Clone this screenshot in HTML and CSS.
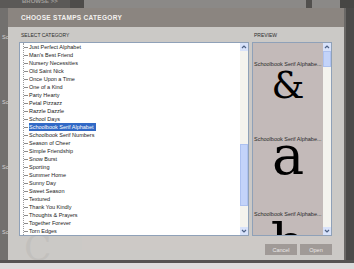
FILE: index.html
```html
<!DOCTYPE html>
<html lang="en">
<head>
    <meta charset="UTF-8">
    <meta name="viewport" content="width=device-width, initial-scale=1.0">
    <title>Choose Stamps Category</title>
    <link rel="stylesheet" href="styles.css">
</head>
<body>
    <div class="app">
        <div class="app-top">
            <div class="top-nav"><span>BROWSE &gt;&gt;</span></div>
            <div class="top-btn"></div>
            <div class="top-fill"></div>
            <div class="top-gap"></div>
            <div class="top-fill short"></div>
            <div class="top-end"></div>
        </div>
        <div class="app-middle">
            <div class="thumbs">
                <div class="thumb"><span>Sc</span></div>
                <div class="thumb"><span>Sc</span></div>
                <div class="thumb"><span>Sc</span></div>
                <div class="thumb"><span>Sc</span></div>
            </div>
            <div class="canvas">
                <div class="canvas-glyph">C</div>
                <div class="canvas-tint"></div>
            </div>
            <div class="app-edge"></div>
        </div>
        <div class="app-bottom"></div>
    </div>

    <div class="dialog">
        <div class="dialog-title">CHOOSE STAMPS CATEGORY</div>
        <div class="dialog-body">
            <div class="panes">
                <div class="category-pane">
                    <div class="pane-label">SELECT CATEGORY</div>
                    <div class="listbox">
                        <ul class="tree">
                            <li>Just Perfect Alphabet</li>
                            <li>Man's Best Friend</li>
                            <li>Nursery Necessities</li>
                            <li>Old Saint Nick</li>
                            <li>Once Upon a Time</li>
                            <li>One of a Kind</li>
                            <li>Party Hearty</li>
                            <li>Petal Pizzazz</li>
                            <li>Razzle Dazzle</li>
                            <li>School Days</li>
                            <li><span class="selected">Schoolbook Serif Alphabet</span></li>
                            <li>Schoolbook Serif Numbers</li>
                            <li>Season of Cheer</li>
                            <li>Simple Friendship</li>
                            <li>Snow Burst</li>
                            <li>Sporting</li>
                            <li>Summer Home</li>
                            <li>Sunny Day</li>
                            <li>Sweet Season</li>
                            <li>Textured</li>
                            <li>Thank You Kindly</li>
                            <li>Thoughts &amp; Prayers</li>
                            <li>Together Forever</li>
                            <li>Torn Edges</li>
                        </ul>
                        <div class="scrollbar">
                            <div class="scroll-btn">
                                <svg width="8" height="8" viewBox="0 0 8 8"><path d="M2 5 L4 3 L6 5" fill="none" stroke="#4d6185" stroke-width="1.2"/></svg>
                            </div>
                            <div class="scroll-track"><div class="thumb-bar list-thumb"></div></div>
                            <div class="scroll-btn">
                                <svg width="8" height="8" viewBox="0 0 8 8"><path d="M2 3 L4 5 L6 3" fill="none" stroke="#4d6185" stroke-width="1.2"/></svg>
                            </div>
                        </div>
                    </div>
                </div>
                <div class="preview-pane">
                    <div class="pane-label">PREVIEW</div>
                    <div class="preview-box">
                        <div class="preview-list">
                            <div class="preview-item">
                                <div class="preview-name">Schoolbook Serif Alphabe...</div>
                                <div class="preview-glyph amp">&amp;</div>
                            </div>
                            <div class="preview-item">
                                <div class="preview-name">Schoolbook Serif Alphabe...</div>
                                <div class="preview-glyph">a</div>
                            </div>
                            <div class="preview-item">
                                <div class="preview-name">Schoolbook Serif Alphabe...</div>
                                <div class="preview-glyph tall">b</div>
                            </div>
                        </div>
                        <div class="scrollbar">
                            <div class="scroll-btn">
                                <svg width="8" height="8" viewBox="0 0 8 8"><path d="M2 5 L4 3 L6 5" fill="none" stroke="#4d6185" stroke-width="1.2"/></svg>
                            </div>
                            <div class="scroll-track"><div class="thumb-bar preview-thumb"></div></div>
                            <div class="scroll-btn">
                                <svg width="8" height="8" viewBox="0 0 8 8"><path d="M2 3 L4 5 L6 3" fill="none" stroke="#4d6185" stroke-width="1.2"/></svg>
                            </div>
                        </div>
                    </div>
                </div>
            </div>
            <div class="actions">
                <button class="btn">Cancel</button>
                <button class="btn">Open</button>
            </div>
        </div>
    </div>
</body>
</html>
```

FILE: styles.css
```css
body {
    margin: 0;
    width: 354px;
    height: 269px;
    overflow: hidden;
    font-family: 'Liberation Sans', Arial, sans-serif;
    background-color: #7a7876;
}

/* app behind the dialog */
.app {
    display: grid;
    grid-template-rows: 8px minmax(0, 1fr) 9px;
    height: 269px;
}
.app-top {
    display: flex;
    background-color: #5b5957;
}
.top-nav {
    width: 70px;
    overflow: hidden;
}
.top-nav span {
    display: block;
    margin: -2px 0 0 22px;
    font-size: 6px;
    line-height: 6px;
    font-weight: bold;
    color: #a19f9c;
}
.top-btn {
    width: 14px;
    background-color: #4e4c4a;
}
.top-fill {
    flex: 1;
    background-color: #8b8987;
}
.top-fill.short {
    flex: none;
    width: 28px;
}
.top-gap {
    width: 6px;
    background-color: #52504e;
}
.top-end {
    width: 14px;
    background-color: #474644;
}
.app-middle {
    display: flex;
    overflow: hidden;
}
.thumbs {
    width: 8px;
    background-color: #72706e;
    overflow: hidden;
}
.thumb {
    height: 65px;
    font-size: 5.5px;
    color: #d6d4d2;
    padding: 26px 0 0 2px;
    box-sizing: border-box;
}
.canvas {
    flex: 1;
    display: flex;
    align-items: flex-end;
    background-color: #8f8d8b;
}
.canvas-glyph {
    font-family: 'DejaVu Serif', serif;
    font-size: 36px;
    line-height: 24px;
    height: 24px;
    color: #111;
    padding-left: 16px;
    width: 58px;
}
.canvas-tint {
    flex: 1;
    height: 14px;
    margin-bottom: 10px;
    background-color: #a58d8b;
}
.app-edge {
    width: 10px;
    background-color: #4b4a49;
    border-left: 2px solid #6a6866;
    box-sizing: border-box;
}
.app-bottom {
    background-color: #dcdcdc;
    border-top: 3px solid #545352;
}

/* dialog */
.dialog {
    position: absolute;
    left: 8px;
    top: 8px;
    width: 336px;
    height: 252px;
    display: flex;
    flex-direction: column;
}
.dialog-title {
    height: 19px;
    line-height: 19px;
    padding-left: 13px;
    background-color: #8b8580;
    color: #f3f1ef;
    font-size: 6.5px;
    font-weight: bold;
    letter-spacing: 0.3px;
}
.dialog-body {
    flex: 1;
    padding: 0 12px 5px 11px;
    background-color: rgba(208, 205, 202, 0.93);
}
.panes {
    display: flex;
    gap: 3px;
}
.category-pane {
    width: 230px;
}
.preview-pane {
    width: 80px;
}
.pane-label {
    height: 15px;
    line-height: 16px;
    font-size: 5px;
    color: #2e2e2e;
    padding-left: 2px;
}
.listbox, .preview-box {
    display: flex;
    height: 194px;
    box-sizing: border-box;
    border: 1px solid #8fa1b8;
}
.listbox {
    background-color: #fff;
}
.tree {
    flex: 1;
    list-style: none;
    margin: 0 0 0 3px;
    padding: 0;
    border-left: 1px dotted #9a9a9a;
    font-size: 5.5px;
    color: #1a1a1a;
}
.tree li {
    display: flex;
    align-items: center;
    height: 8px;
}
.tree li::before {
    content: "";
    width: 4px;
    margin-right: 1px;
    border-top: 1px solid #8c8c8c;
}
.selected {
    background-color: #3169c6;
    color: #fff;
    line-height: 8px;
    padding-right: 2px;
}

/* xp style scrollbars */
.scrollbar {
    width: 8px;
    display: flex;
    flex-direction: column;
    background-color: #f4f3ee;
}
.scroll-btn {
    height: 8px;
    background-color: #d8e2fa;
}
.scroll-btn svg {
    display: block;
}
.scroll-track {
    flex: 1;
}
.thumb-bar {
    background-color: #c3d3f9;
    border: 1px solid #adc1f0;
    box-sizing: border-box;
}
.list-thumb {
    margin-top: 93px;
    height: 62px;
}
.preview-thumb {
    margin-top: 0;
    height: 16px;
}

/* preview */
.preview-box {
    background-color: #c3bab9;
}
.preview-list {
    flex: 1;
    overflow: hidden;
}
.preview-item {
    height: 75px;
    padding-top: 17px;
    box-sizing: border-box;
}
.preview-name {
    height: 8px;
    line-height: 8px;
    font-size: 5.5px;
    color: #2a2a2a;
    padding-left: 1px;
    white-space: nowrap;
}
.preview-glyph {
    font-family: 'DejaVu Serif', serif;
    font-size: 54px;
    line-height: 25px;
    height: 25px;
    text-align: center;
    color: #000;
}
.preview-glyph.amp {
    font-size: 37px;
    line-height: 36px;
}
.preview-glyph.tall {
    line-height: 51px;
    height: 19px;
    overflow: hidden;
}

.actions {
    display: flex;
    justify-content: flex-end;
    gap: 3px;
    margin-top: 8px;
}
.btn {
    width: 32px;
    height: 11px;
    padding: 0;
    border: none;
    background-color: #a09a97;
    color: #ebe9e7;
    font-family: 'Liberation Sans', Arial, sans-serif;
    font-size: 5.5px;
}
```
